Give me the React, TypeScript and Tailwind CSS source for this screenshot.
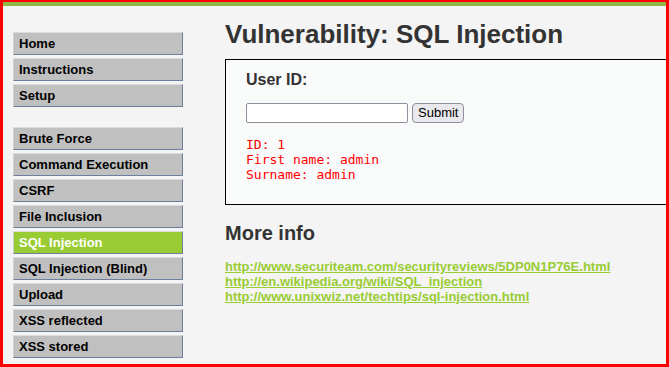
import React from "react";

const menu1 = ["Home", "Instructions", "Setup"];
const menu2 = [
  "Brute Force",
  "Command Execution",
  "CSRF",
  "File Inclusion",
  "SQL Injection",
  "SQL Injection (Blind)",
  "Upload",
  "XSS reflected",
  "XSS stored",
];

function Item({ label, active }: { label: string; active?: boolean }) {
  return (
    <div
      className={
        "h-[23px] w-[170px] border-t border-l border-t-[#dcdcdc] border-l-[#d0d0d0] border-r border-b border-r-[#6d7f9d] border-b-[#6d7f9d] pl-[5px] text-[13px] leading-[21px] font-bold " +
        (active ? "bg-[#99cc33] text-white" : "bg-[#c0c0c0] text-black")
      }
    >
      {label}
    </div>
  );
}

export default function App() {
  return (
    <div
      className="w-[669px] h-[367px] overflow-hidden border-t-2 border-l-[3px] border-r-[3px] border-b-[3px] border-[#ff0000] flex flex-col bg-[#f4f4f4]"
      style={{ fontFamily: '"Liberation Sans", Arial, sans-serif' }}
    >
      <div className="h-[4px] bg-[#8fb744] shrink-0" />
      <div className="flex flex-1">
        <div className="pl-[10px] pt-[26px] flex flex-col shrink-0">
          <div className="flex flex-col gap-[3px]">
            {menu1.map((m) => (
              <Item key={m} label={m} />
            ))}
          </div>
          <div className="flex flex-col gap-[3px] mt-[20px]">
            {menu2.map((m) => (
              <Item key={m} label={m} active={m === "SQL Injection"} />
            ))}
          </div>
        </div>
        <div className="ml-[42px] flex flex-col flex-1 min-w-0">
          <h1 className="mt-[13px] text-[26px] leading-[30px] font-bold text-[#333333] whitespace-nowrap">
            Vulnerability: SQL Injection
          </h1>
          <div className="mt-[10px] h-[146px] w-[460px] border border-black bg-[#f9fafa] pl-[20px] pt-[10px] shrink-0">
            <div className="text-[16px] leading-[20px] font-bold text-[#333333]">User ID:</div>
            <div className="mt-[13px] flex items-center gap-[4px]">
              <div className="w-[162px] h-[20px] border border-[#8f8f9d] rounded-[2px] bg-white" />
              <div className="h-[20px] px-[5px] border border-[#8f8f9d] rounded-[4px] bg-[#e9e9ed] text-[13px] leading-[18px] text-black">
                Submit
              </div>
            </div>
            <pre
              className="mt-[14px] text-[13px] leading-[15px] text-[#ff0000]"
              style={{ fontFamily: '"DejaVu Sans Mono", monospace' }}
            >
              {"ID: 1\nFirst name: admin\nSurname: admin"}
            </pre>
          </div>
          <h2 className="mt-[16px] text-[20px] leading-[24px] font-bold text-[#333333]">More info</h2>
          <div className="mt-[14px] flex flex-col text-[13px] leading-[15px] font-bold">
            <a className="text-[#99cc33] underline">http://www.securiteam.com/securityreviews/5DP0N1P76E.html</a>
            <a className="text-[#99cc33] underline">http://en.wikipedia.org/wiki/SQL_injection</a>
            <a className="text-[#99cc33] underline">http://www.unixwiz.net/techtips/sql-injection.html</a>
          </div>
        </div>
      </div>
    </div>
  );
}
